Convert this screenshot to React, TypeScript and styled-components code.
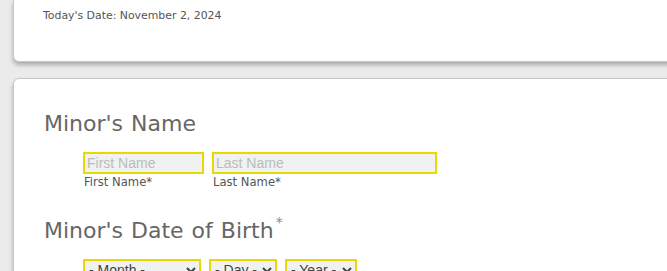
import React from "react";
import styled, { createGlobalStyle } from "styled-components";

const GlobalStyle = createGlobalStyle`
  html, body {
    margin: 0;
    padding: 0;
    background-color: #ebebeb;
    overflow: hidden;
  }
  body {
    font-family: "DejaVu Sans", Verdana, sans-serif;
  }
`;

const Page = styled.div`
  display: flex;
  flex-direction: column;
  gap: 16px;
  padding-left: 13px;
  margin-right: -40px;
`;

const Card = styled.section<{ $top?: boolean }>`
  background-color: #fff;
  border: 1px solid #c8c8c8;
  border-radius: 6px;
  box-shadow: 0 3px 4px rgba(0, 0, 0, 0.28);
  ${({ $top }) =>
    $top
      ? `
    border-top: none;
    border-top-left-radius: 0;
    border-top-right-radius: 0;
  `
      : ""}
`;

const DateLine = styled.div`
  padding: 9px 0 0 29px;
  box-sizing: border-box;
  height: 61px;
  font-size: 10.9px;
  color: #555;
`;

const FormBody = styled.div`
  padding: 30px 0 40px 30px;
`;

const SectionTitle = styled.h2`
  margin: 0;
  font-weight: normal;
  font-size: 22px;
  line-height: 30px;
  color: #666;
  word-spacing: 1px;
  sup {
    font-size: 14px;
    line-height: 1;
    position: relative;
    top: -1px;
    vertical-align: top;
    margin-left: 2px;
    color: #888;
  }
`;

const FieldRow = styled.div`
  display: flex;
  gap: 8px;
  padding-left: 39px;
  margin: 13px 0 27px;
`;

const Field = styled.div`
  display: flex;
  flex-direction: column;
`;

const TextInput = styled.input<{ $w: number }>`
  width: ${({ $w }) => $w}px;
  height: 22px;
  box-sizing: border-box;
  border: 2px solid #e8d900;
  background-color: #f0f1f1;
  padding: 0 2px;
  font-family: "Liberation Sans", Arial, sans-serif;
  font-size: 14px;
  color: #333;
  outline: none;
  &::placeholder {
    color: #bbbbbb;
  }
`;

const FieldLabel = styled.label`
  font-size: 11.6px;
  color: #555;
  margin-top: 1px;
  padding-left: 1px;
`;

const SelectBox = styled.select<{ $w: number }>`
  width: ${({ $w }) => $w}px;
  height: 22px;
  box-sizing: border-box;
  border: 2px solid #e8d900;
  border-radius: 0;
  background-color: #f0f1f1;
  font-family: "Liberation Sans", Arial, sans-serif;
  font-size: 14px;
  color: #444;
  outline: none;
`;

const dobFields = [
  { label: "- Month -", w: 118 },
  { label: "- Day -", w: 68 },
  { label: "- Year -", w: 72 },
];

export default function App() {
  return (
    <>
      <GlobalStyle />
      <Page>
        <Card $top>
          <DateLine>Today's Date: November 2, 2024</DateLine>
        </Card>
        <Card>
          <FormBody>
            <SectionTitle>Minor's Name</SectionTitle>
            <FieldRow>
              <Field>
                <TextInput $w={121} placeholder="First Name" />
                <FieldLabel>First Name*</FieldLabel>
              </Field>
              <Field>
                <TextInput $w={225} placeholder="Last Name" />
                <FieldLabel>Last Name*</FieldLabel>
              </Field>
            </FieldRow>
            <SectionTitle>
              Minor's Date of Birth<sup>*</sup>
            </SectionTitle>
            <FieldRow>
              {dobFields.map((f) => (
                <SelectBox key={f.label} $w={f.w} defaultValue="">
                  <option value="">{f.label}</option>
                </SelectBox>
              ))}
            </FieldRow>
          </FormBody>
        </Card>
      </Page>
    </>
  );
}
